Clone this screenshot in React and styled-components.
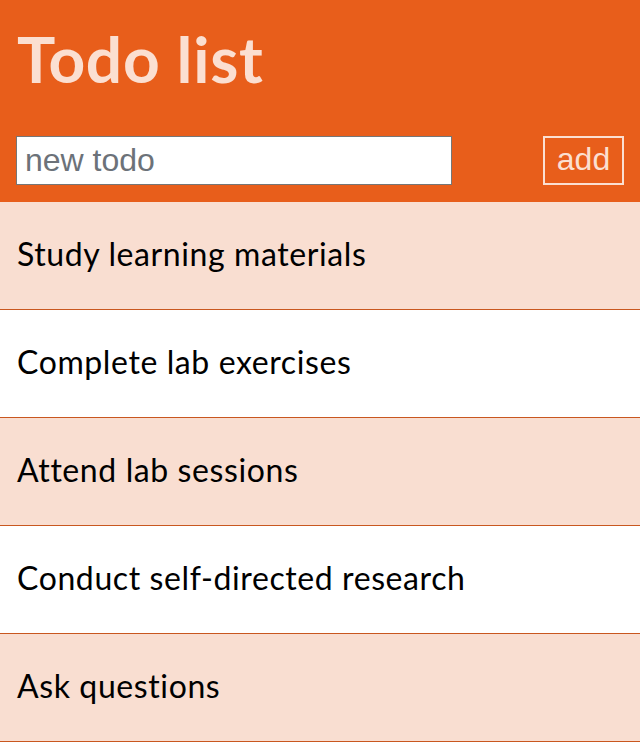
import React from "react";
import styled, { createGlobalStyle } from "styled-components";

const GlobalStyle = createGlobalStyle`
  body {
    margin: 0;
    background: #ffffff;
    font-family: Lato, "Open Sans", sans-serif;
  }
`;

const todos = [
  "Study learning materials",
  "Complete lab exercises",
  "Attend lab sessions",
  "Conduct self-directed research",
  "Ask questions",
];

function App() {
  return (
    <Page>
      <GlobalStyle />
      <Header>
        <Title>Todo list</Title>
        <Form onSubmit={(e) => e.preventDefault()}>
          <Input placeholder="new todo" />
          <AddButton type="submit">add</AddButton>
        </Form>
      </Header>
      <List>
        {todos.map((t, i) => (
          <Item key={t} $odd={i % 2 === 0}>
            {t}
          </Item>
        ))}
      </List>
    </Page>
  );
}

const Page = styled.div`
  display: flex;
  flex-direction: column;
  width: 640px;
`;

const Header = styled.header`
  background-color: #e85e1b;
  display: flex;
  flex-direction: column;
  padding: 0 16px 17px 16px;
  height: 202px;
  box-sizing: border-box;
`;

const Title = styled.h1`
  font-family: Lato, "Open Sans", sans-serif;
  font-weight: 700;
  font-size: 64px;
  line-height: 80px;
  letter-spacing: 0.7px;
  color: #fbdfd1;
  margin: 19px 0 0 1px;
`;

const Form = styled.form`
  display: flex;
  justify-content: space-between;
  align-items: center;
  margin-top: auto;
`;

const Input = styled.input`
  width: 436px;
  height: 49px;
  box-sizing: border-box;
  border: 1px solid #767676;
  background: #ffffff;
  font-family: "Liberation Sans", Arial, sans-serif;
  font-size: 32px;
  padding: 0 8px;
  outline: none;
  &::placeholder {
    color: #6c7279;
  }
`;

const AddButton = styled.button`
  width: 81px;
  height: 49px;
  box-sizing: border-box;
  background: transparent;
  border: 2px solid #fbdfd1;
  color: #fbdfd1;
  font-family: "Liberation Sans", Arial, sans-serif;
  font-size: 32px;
  padding: 0 0 2px 0;
`;

const List = styled.ul`
  list-style: none;
  margin: 0;
  padding: 0;
`;

const Item = styled.li`
  display: flex;
  align-items: center;
  height: 108px;
  box-sizing: border-box;
  padding: 0 0 4px 17px;
  border-bottom: 1px solid #c9571f;
  background-color: ${(p) => (p.$odd ? "#f9ded1" : "#ffffff")};
  font-family: Lato, "Open Sans", sans-serif;
  font-size: 32px;
  letter-spacing: 0.6px;
  color: #000000;
`;

export default App;
